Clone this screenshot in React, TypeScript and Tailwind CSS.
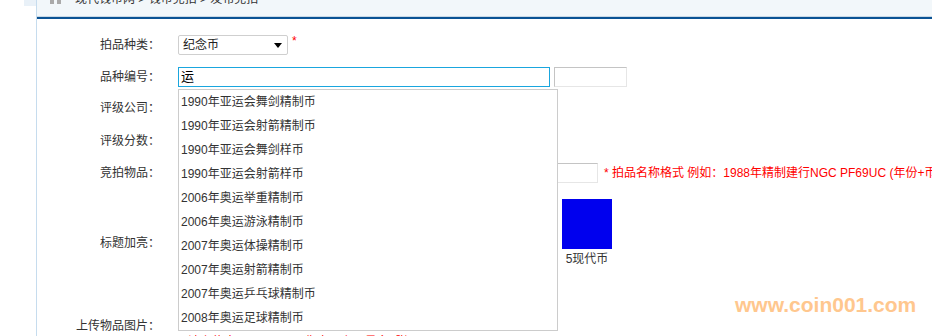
import React from "react";

const FONT = "font-['Liberation_Sans','Noto_Sans_CJK_SC',sans-serif]";

const items = [
  "1990年亚运会舞剑精制币",
  "1990年亚运会射箭精制币",
  "1990年亚运会舞剑样币",
  "1990年亚运会射箭样币",
  "2006年奥运举重精制币",
  "2006年奥运游泳精制币",
  "2007年奥运体操精制币",
  "2007年奥运射箭精制币",
  "2007年奥运乒乓球精制币",
  "2008年奥运足球精制币",
];

function Label({ children }: { children: React.ReactNode }) {
  return (
    <div className="w-[123px] shrink-0 text-right text-[12px] leading-[14px] text-[#333]">
      {children}
    </div>
  );
}

export default function App() {
  return (
    <div className={`relative w-[932px] h-[336px] overflow-hidden bg-white ${FONT}`}>
      <div className="flex h-full">
        <div className="w-[36px] shrink-0">
          <div className="ml-[24px] h-[6px] w-[12px] bg-[#e9f1f8]" />
        </div>
        <div className="flex-1 border-l border-[#c6dcee] overflow-hidden">
          {/* breadcrumb */}
          <div className="h-[17px] bg-[#f2f7fa] border-b border-[#c9d9e6] flex items-end overflow-hidden">
            <div className="flex items-center h-[14px] mb-[10px] pl-[13px] text-[12px] leading-[14px] text-[#333]">
              <span className="flex gap-[3px] mr-[14px] mt-[6px]">
                <span className="w-[4px] h-[4px] bg-[#aaa]" />
                <span className="w-[4px] h-[4px] bg-[#aaa]" />
              </span>
              <span>现代钱币网 &gt; 钱币竞拍 &gt; 发布竞拍</span>
            </div>
          </div>
          <div className="h-[2px] bg-[#0b5394]" />

          <div className="mt-[10px]">
            {/* row 1 */}
            <div className="h-[32px] flex items-center">
              <Label>拍品种类：</Label>
              <div className="ml-[18px] flex items-center">
                <div className="w-[110px] h-[20px] border border-[#cfcfcf] rounded-[2px] flex items-center justify-between pl-[4px] pr-[5px] text-[12px] text-[#222]">
                  <span>纪念币</span>
                  <span className="w-0 h-0 border-l-[4px] border-r-[4px] border-t-[5px] border-l-transparent border-r-transparent border-t-black mt-[1px]" />
                </div>
                <span className="ml-[4px] -mt-[9px] text-[12px] text-[#f00]">*</span>
              </div>
            </div>
            {/* row 2 */}
            <div className="h-[31px] flex items-center relative z-10">
              <Label>品种编号：</Label>
              <div className="ml-[18px] flex items-center gap-[4px]">
                <div className="relative">
                  <div className="w-[372px] h-[20px] border border-[#1aa6de] flex items-center pl-[2px] text-[13px] text-black">
                    运
                  </div>
                  <div className="absolute left-0 top-[22px] w-[380px] border border-[#cccccc] bg-white">
                    {items.map((t) => (
                      <div
                        key={t}
                        className="h-[24px] flex items-center pl-[2px] text-[12px] text-[#333] whitespace-nowrap"
                      >
                        {t}
                      </div>
                    ))}
                  </div>
                </div>
                <div className="w-[73px] h-[20px] border border-[#c4c4c4] border-b-[#e6e6e6] border-r-[#e6e6e6]" />
              </div>
            </div>
            {/* row 3 */}
            <div className="h-[32px] flex items-center">
              <Label>评级公司：</Label>
            </div>
            {/* row 4 */}
            <div className="h-[33px] flex items-center">
              <Label>评级分数：</Label>
            </div>
            {/* row 5 */}
            <div className="h-[32px] flex items-center">
              <Label>竞拍物品：</Label>
              <div className="ml-[18px] flex items-center">
                <div className="w-[420px] h-[20px] border border-[#c4c4c4] border-b-[#e6e6e6] border-r-[#e6e6e6] shrink-0" />
                <span className="ml-[6px] text-[12px] text-[#f00] whitespace-nowrap">
                  * 拍品名称格式 例如：1988年精制建行NGC PF69UC (年份+币种+评级)
                </span>
              </div>
            </div>
            {/* row 6 */}
            <div className="h-[108px] flex items-center">
              <Label>标题加亮：</Label>
              <div className="ml-[402px] self-start pt-[10px] flex">
                <div className="w-[50px] flex flex-col items-center">
                  <div className="w-[50px] h-[50px] bg-[#0000ee]" />
                  <span className="mt-[3px] text-[12px] leading-[14px] text-[#333] whitespace-nowrap">5现代币</span>
                </div>
              </div>
            </div>
            {/* row 7 */}
            <div className="flex items-start">
              <div className="pt-[22px]">
                <Label>上传物品图片：</Label>
              </div>
              <div className="ml-[28px] pt-[38px] text-[12px] leading-[14px] text-[#f00] whitespace-nowrap">
                请上传大图，800*600像素以上，最多5张
              </div>
            </div>
          </div>
        </div>
      </div>
      <div className="absolute left-[735px] top-[293px] text-[21px] leading-[24px] font-bold text-[#ffc78e] font-['Liberation_Sans',sans-serif]">
        www.coin001.com
      </div>
    </div>
  );
}
